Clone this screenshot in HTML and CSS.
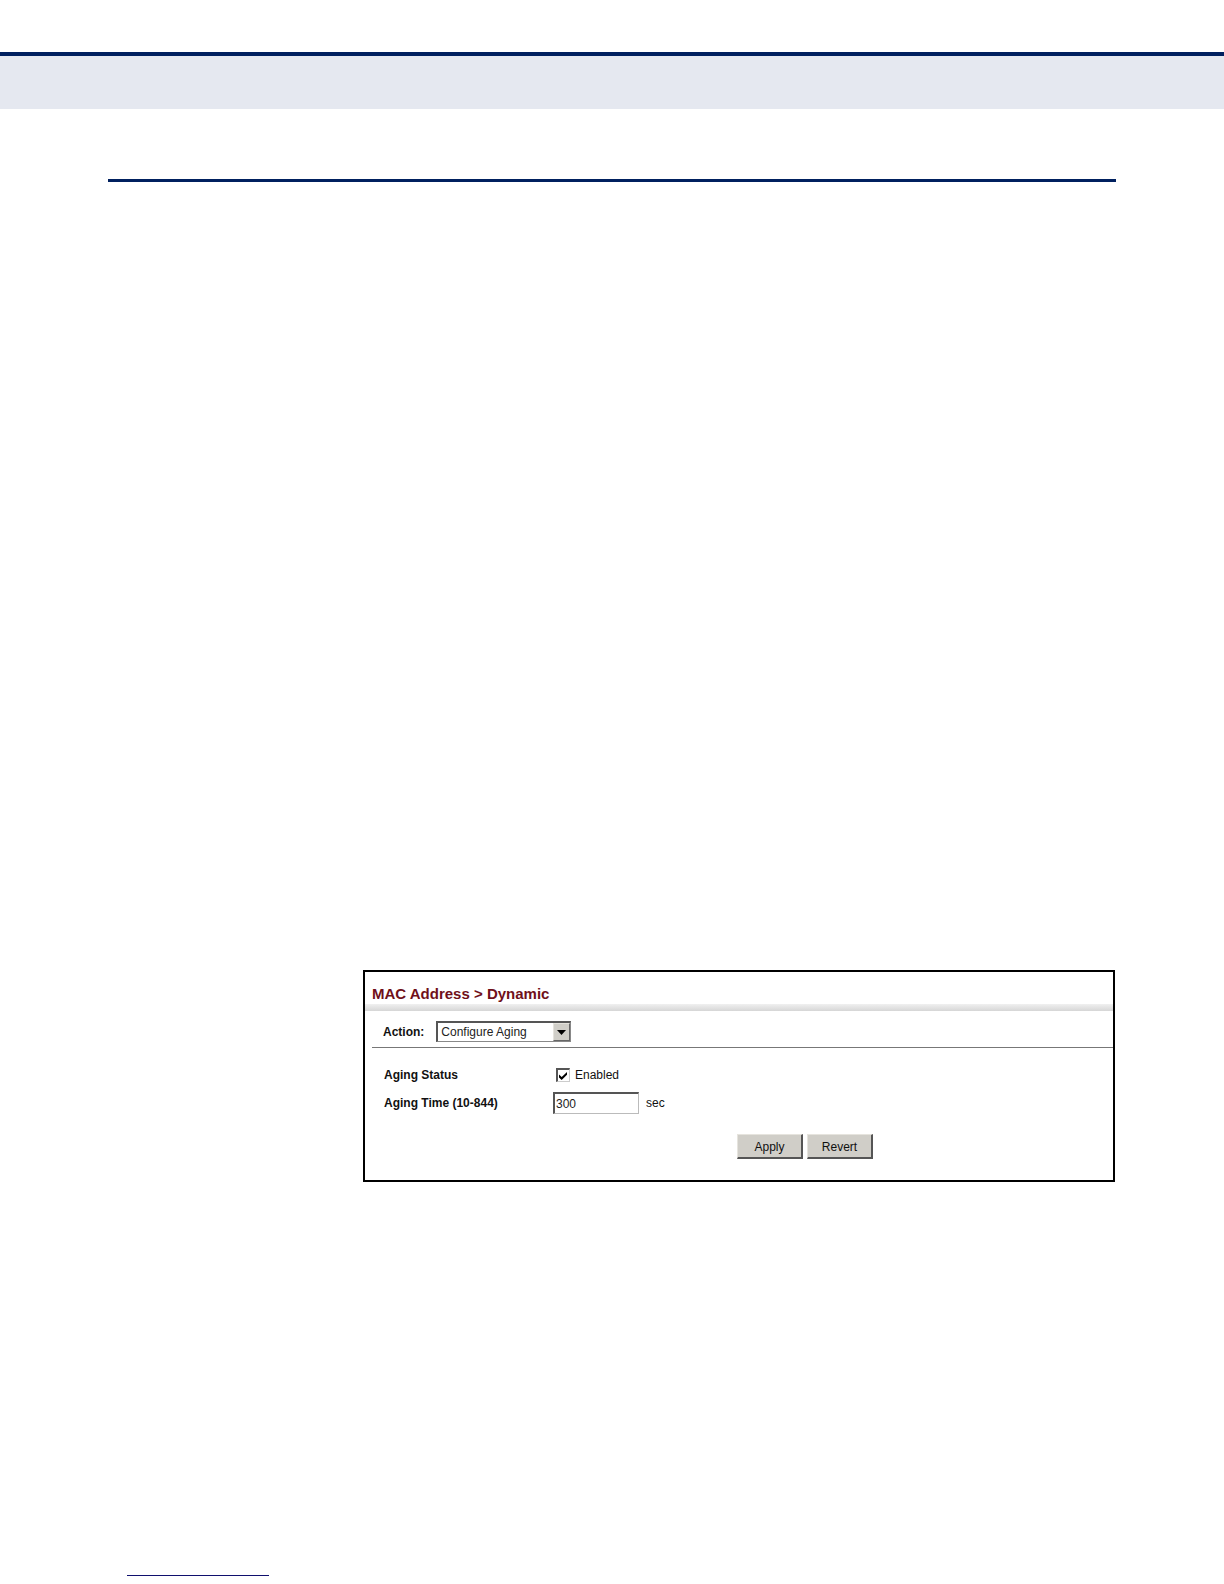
FILE: index.html
```html
<!DOCTYPE html>
<html lang="en">

<head>
    <meta charset="UTF-8" />
    <meta name="viewport" content="width=device-width, initial-scale=1.0" />
    <title>MAC Address &gt; Dynamic</title>
    <link rel="stylesheet" href="styles.css">
</head>

<body>
    <header class="page-band"></header>

    <main class="page-body">
        <hr class="page-rule">

        <form class="panel">
            <h1 class="panel-title">MAC Address &gt; Dynamic</h1>

            <div class="action-bar">
                <label for="action">Action:</label>
                <div class="select-wrap">
                    <select id="action">
                        <option selected>Configure Aging</option>
                    </select>
                    <span class="select-arrow">
                        <svg width="9" height="5" viewBox="0 0 9 5"><path d="M0 0h9L4.5 5z" /></svg>
                    </span>
                </div>
            </div>

            <div class="fields">
                <div class="field">
                    <label class="field-name" for="status">Aging Status</label>
                    <div class="field-value check-value">
                        <input type="checkbox" id="status" checked>
                        <svg class="tick" width="8" height="8" viewBox="0 0 8 8"><path d="M0 2.5v3L2.7 8 8 2.8V0L2.7 5z" /></svg>
                        <label for="status">Enabled</label>
                    </div>
                </div>
                <div class="field">
                    <label class="field-name" for="time">Aging Time (10-844)</label>
                    <div class="field-value">
                        <input type="text" id="time" value="300">
                        <span>sec</span>
                    </div>
                </div>
            </div>

            <div class="buttons">
                <button type="button">Apply</button>
                <button type="reset">Revert</button>
            </div>
        </form>
    </main>

    <footer class="page-footer">
        <div class="footer-line"></div>
    </footer>
</body>

</html>
```

FILE: styles.css
```css
* {
    box-sizing: border-box;
    margin: 0;
    padding: 0;
}

body {
    display: flex;
    flex-direction: column;
    min-height: 100vh;
    padding-top: 52px;
    background: #fff;
    color: #111;
    font-family: "Liberation Sans", Arial, sans-serif;
    font-size: 12px;
    line-height: 16px;
}

.page-band {
    height: 57px;
    border-top: 4px solid #00205f;
    background: #e5e8f0;
}

.page-body {
    flex: 1;
    padding: 70px 108px 0;
}

.page-rule {
    height: 3px;
    border: 0;
    background: #00205f;
}

/* panel */
.panel {
    margin: 788px 1px 0 255px;
    border: 2px solid #000;
    padding-bottom: 21px;
}

.panel-title {
    height: 39px;
    padding: 12px 7px 0;
    background: linear-gradient(#f0f0f0, #d6d6d6) bottom / 100% 7px no-repeat;
    color: #70101a;
    font-size: 15px;
    line-height: 20px;
}

.action-bar {
    display: flex;
    align-items: center;
    gap: 12px;
    height: 37px;
    margin-left: 7px;
    padding: 5px 0 0 11px;
    border-bottom: 1px solid #777;
    font-weight: bold;
}

.select-wrap {
    position: relative;
    width: 135px;
}

select {
    display: block;
    appearance: none;
    width: 100%;
    height: 21px;
    padding-left: 3px;
    border: 1px solid #888;
    border-top: 2px solid #555;
    border-left: 2px solid #555;
    border-radius: 0;
    background: #fff;
    color: #222;
    font: 12px "Liberation Sans", Arial, sans-serif;
}

.select-arrow {
    position: absolute;
    top: 2px;
    right: 1px;
    display: flex;
    align-items: center;
    justify-content: center;
    width: 17px;
    height: 18px;
    border: 1px solid #e4e2dc;
    border-right-color: #666;
    border-bottom-color: #666;
    background: #d0cec8;
    pointer-events: none;
}

/* fields */
.fields {
    display: flex;
    flex-direction: column;
    gap: 6px;
    padding: 16px 19px 0;
}

.field {
    display: flex;
    align-items: center;
    height: 22px;
}

.field-name {
    width: 169px;
    font-weight: bold;
}

.field-value {
    position: relative;
    display: flex;
    align-items: center;
    gap: 7px;
}

.check-value {
    gap: 5px;
    padding-left: 3px;
}

input[type="checkbox"] {
    appearance: none;
    width: 14px;
    height: 14px;
    border: 1px solid #ccc;
    border-top: 2px solid #555;
    border-left: 2px solid #555;
    background: #fff;
}

.tick {
    position: absolute;
    top: 5px;
    left: 6px;
    visibility: hidden;
    pointer-events: none;
}

input:checked + .tick {
    visibility: visible;
}

input[type="text"] {
    width: 86px;
    height: 22px;
    padding-left: 1px;
    border: 1px solid #bbb;
    border-top: 2px solid #555;
    border-left: 2px solid #555;
    background: #fff;
    color: #222;
    font: 12px "Liberation Sans", Arial, sans-serif;
}

/* buttons */
.buttons {
    display: flex;
    justify-content: center;
    gap: 4px;
    padding: 20px 0 0 132px;
}

button {
    width: 66px;
    height: 25px;
    padding-top: 1px;
    border: 1px solid #e6e4de;
    border-right: 2px solid #555;
    border-bottom: 2px solid #555;
    background: #d0cec8;
    color: #111;
    font: 12px "Liberation Sans", Arial, sans-serif;
}

.page-footer {
    padding: 0 127px 8px;
}

.footer-line {
    width: 142px;
    height: 1px;
    background: #10106e;
}
```
